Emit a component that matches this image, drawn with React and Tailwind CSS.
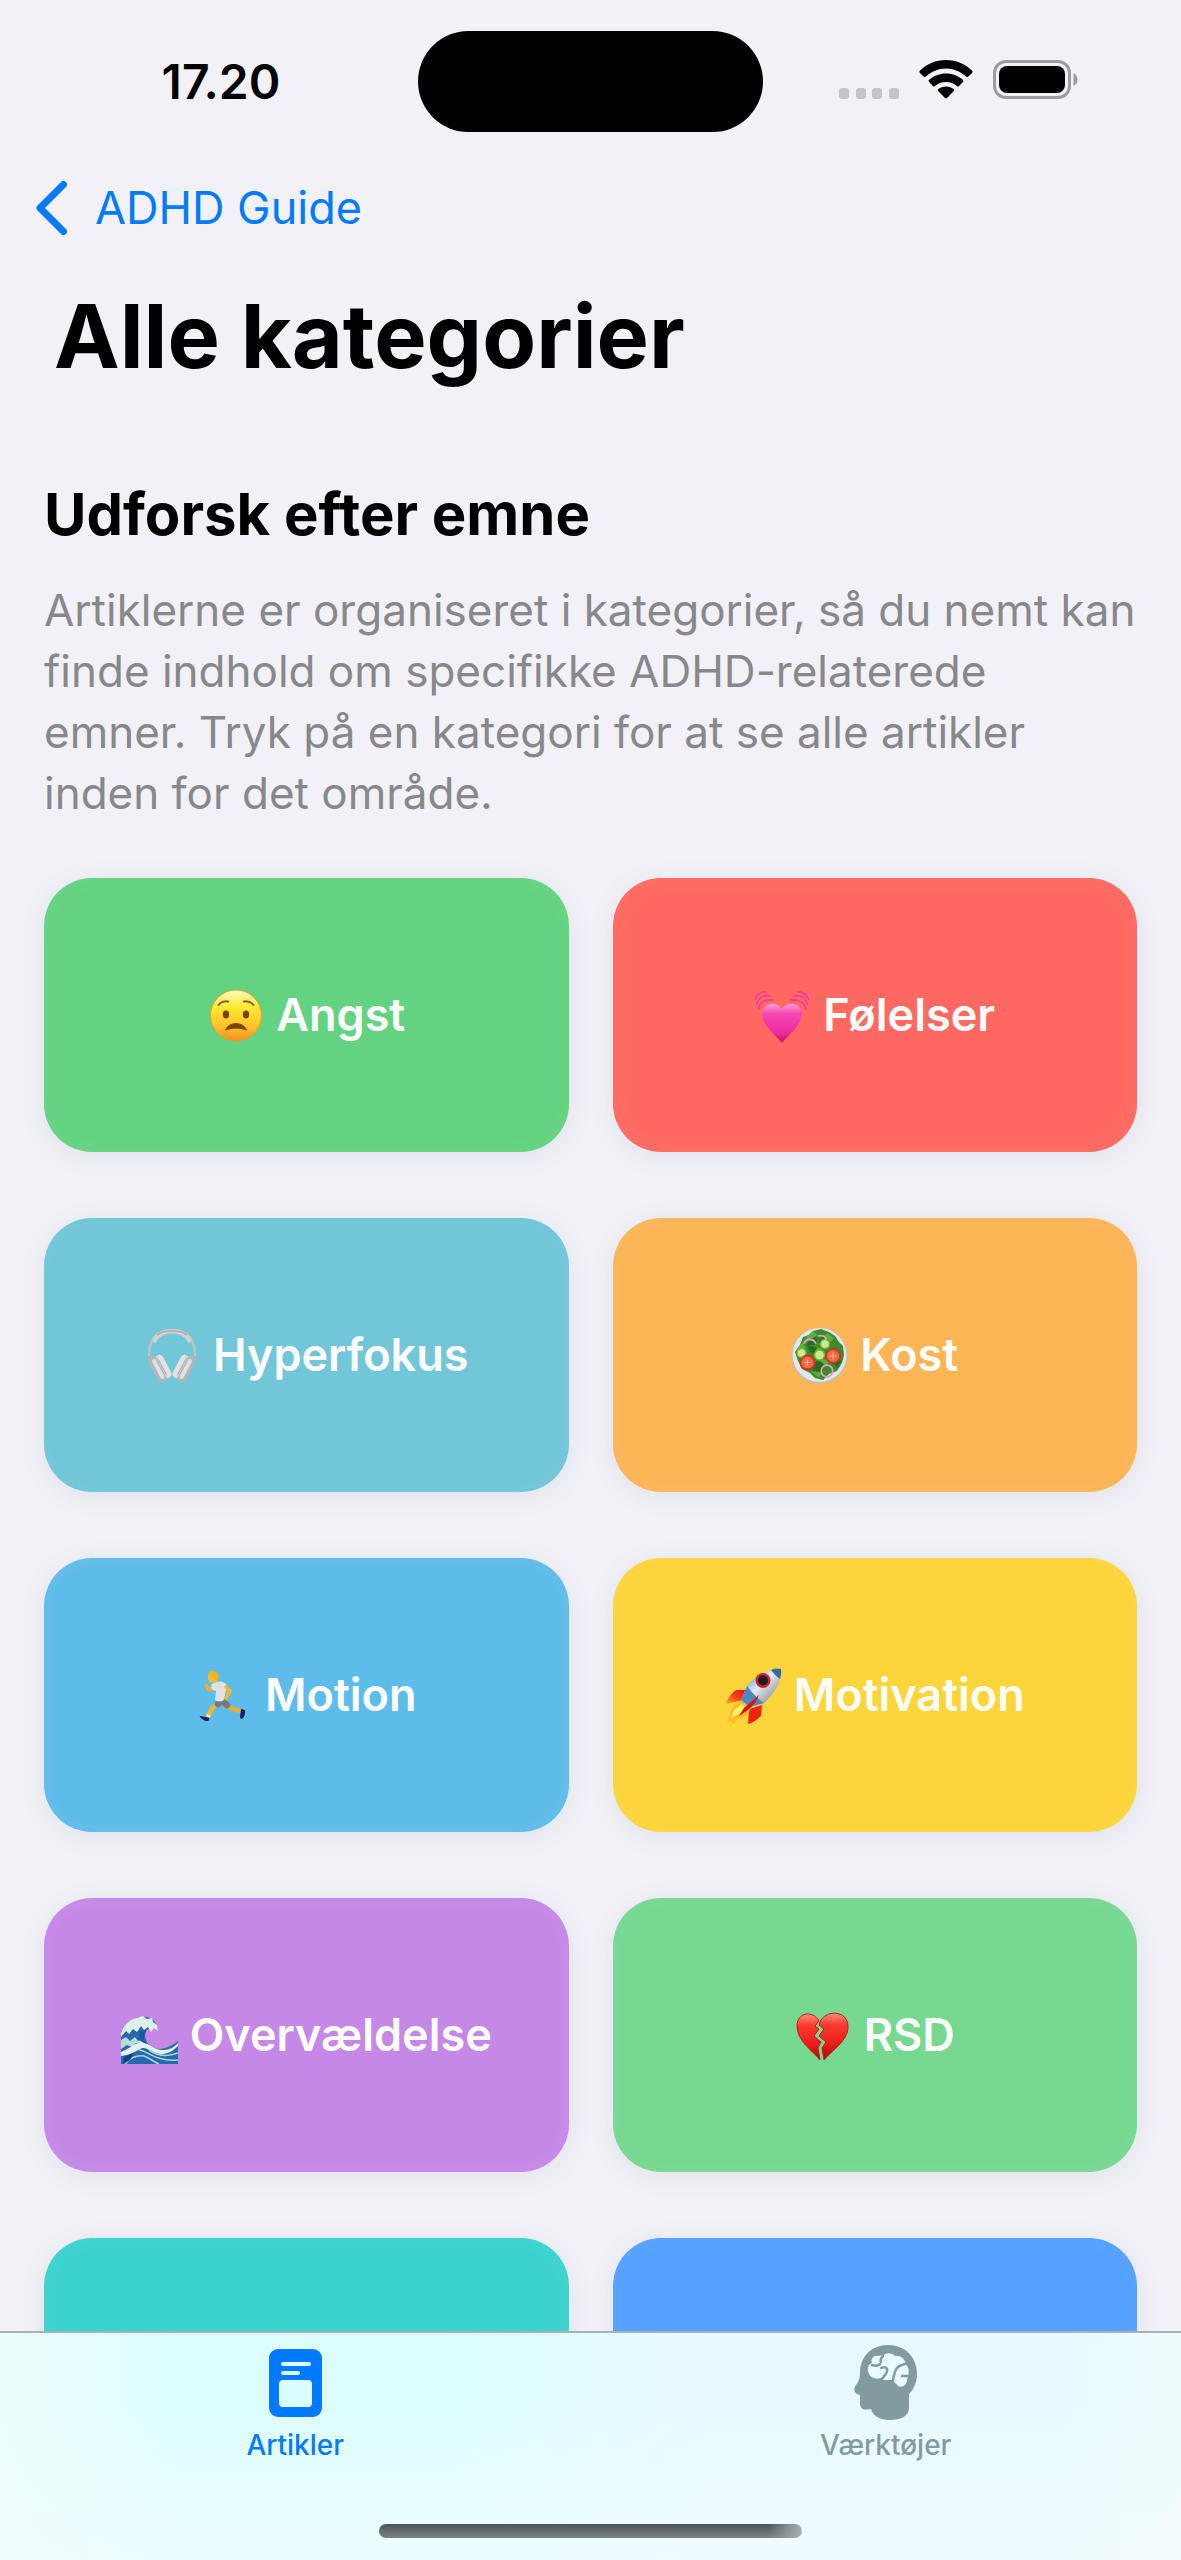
const SignalDots = () => (
  <svg viewBox="0 0 60 44" className="w-[60px] h-11" fill="#c5c5c9" aria-hidden="true">
    <rect x="0" y="28" width="10" height="11" rx="3" />
    <rect x="17" y="28" width="10" height="11" rx="3" />
    <rect x="33" y="28" width="10" height="11" rx="3" />
    <rect x="50" y="28" width="10" height="11" rx="3" />
  </svg>
);

const WifiIcon = () => (
  <svg viewBox="0 0 54 44" className="w-[54px] h-11" aria-hidden="true">
    <path d="M27 0C17 0 8 4 1 10.500C0.200 11.300 0.200 12.200 0.900 12.900L4.600 16.600C5.300 17.300 6.100 17.200 6.900 16.500C12.500 11.500 19.500 8.500 27 8.500S41.500 11.500 47.100 16.500C47.900 17.200 48.700 17.300 49.400 16.600L53.100 12.900C53.800 12.200 53.800 11.300 53 10.500C46 4 37 0 27 0Z" />
    <path d="M27 13.500C20.500 13.500 14.700 15.800 10.200 19.800C9.400 20.500 9.400 21.400 10.100 22.100L13.900 25.900C14.600 26.600 15.400 26.600 16.200 25.900C19.100 23.400 22.800 21.900 27 21.900S34.900 23.400 37.800 25.900C38.600 26.600 39.400 26.600 40.100 25.900L43.900 22.100C44.600 21.400 44.600 20.500 43.800 19.800C39.300 15.800 33.500 13.500 27 13.500Z" />
    <path d="M27 26.500C24 26.500 21.500 27.400 19.500 29C18.600 29.700 18.700 30.600 19.400 31.300L25.700 37.700C26.500 38.500 27.500 38.500 28.300 37.700L34.600 31.300C35.300 30.600 35.400 29.700 34.500 29C32.500 27.400 30 26.500 27 26.500Z" />
  </svg>
);

const BatteryIcon = () => (
  <svg viewBox="0 0 85 44" className="w-[85px] h-11" aria-hidden="true">
    <rect x="1.500" y="1.500" width="75" height="36" rx="11.500" fill="none" stroke="#9c9ca0" strokeWidth="3" />
    <rect x="6" y="6" width="66" height="27" rx="8" />
    <path d="M80.500 13C83.500 14.500 84.500 17 84.500 19.500S83.500 24.500 80.500 26Z" fill="#9c9ca0" />
  </svg>
);

const WorriedFace = () => (
  <svg viewBox="0 0 57 57" className="size-[57px]" aria-hidden="true">
    <defs>
      <linearGradient id="face" x1="0" y1="0" x2="0" y2="1">
        <stop offset="0" stopColor="#fffbc0" />
        <stop offset="0.350" stopColor="#ffe72f" />
        <stop offset="0.700" stopColor="#fec42a" />
        <stop offset="1" stopColor="#f98f1e" />
      </linearGradient>
    </defs>
    <circle cx="29" cy="28.500" r="25.500" fill="url(#face)" stroke="#f0941c" strokeWidth="0.800" />
    <g fill="none" stroke="#8a4a0c" strokeWidth="1.800" strokeLinecap="round">
      <path d="M11.500 18C14 15 17.500 14 21 14.500" />
      <path d="M37 14.500C40.500 14 44 15 46.500 18" />
    </g>
    <ellipse cx="19" cy="27.500" rx="3.200" ry="4" fill="#7a430d" />
    <ellipse cx="39" cy="27.500" rx="3.200" ry="4" fill="#7a430d" />
    <path d="M18.500 43C21.500 34.500 36.500 34.500 39.500 43C34 40.500 24 40.500 18.500 43Z" fill="#7a430d" stroke="#7a430d" strokeLinejoin="round" />
  </svg>
);

const BeatingHeart = () => (
  <svg viewBox="0 0 57 57" className="size-[57px]" aria-hidden="true">
    <defs>
      <linearGradient id="pink" x1="0" y1="0" x2="0" y2="1">
        <stop offset="0" stopColor="#ff9fd8" />
        <stop offset="0.250" stopColor="#f747b0" />
        <stop offset="0.750" stopColor="#ea2b9f" />
        <stop offset="1" stopColor="#c90f60" />
      </linearGradient>
    </defs>
    <path d="M28 56C24 50 8 39 8 27C8 16 22 13 28 22C34 13 48 16 48 27C48 39 32 50 28 56Z" fill="url(#pink)" />
    <g fill="none" stroke="#ee3c9f" strokeWidth="1.700" strokeLinecap="round">
      <path d="M4.500 22C5 16 10 12 19.500 13" />
      <path d="M2.500 17.500C4 11 9 7.500 16.500 9" />
      <path d="M1.500 12C3.500 7 7.500 4.500 12.500 5" />
      <path d="M51.500 22C51 16 46 12 36.500 13" />
      <path d="M53.500 17.500C52 11 47 7.500 39.500 9" />
      <path d="M54.500 12C52.500 7 48.500 4.500 43.500 5" />
    </g>
  </svg>
);

const Headphones = () => (
  <svg viewBox="0 0 57 57" className="size-[57px]" aria-hidden="true">
    <path d="M5 29C5 24 5.500 20 7 16C10 7 18 3 28 3S46 7 49 16C50.500 20 51 24 51 29" fill="none" stroke="#c3c3c6" strokeWidth="2.200" />
    <path d="M8 14C12 5 19 2 28 2S44 5 48 14L44.500 16C41 9 35 6.500 28 6.500S15 9 11.500 16Z" fill="#d0cfd1" />
    <path d="M13 8C20 2.500 36 2.500 43 8" fill="none" stroke="#a8a5a9" strokeWidth="1.200" />
    <g fill="none" strokeLinecap="round">
      <path d="M15.500 32L23.500 47M40.500 32L32.500 47" stroke="#e2e2e4" strokeWidth="8" />
      <path d="M8.500 33L18 51M47.500 33L38 51" stroke="#b4b5b9" strokeWidth="9" />
      <path d="M10 34L18.500 50M46 34L37.500 50" stroke="#dfe0e2" strokeWidth="4" />
      <path d="M13.500 31L22.500 48M42.500 31L33.500 48" stroke="#a9abaf" strokeWidth="1" />
    </g>
  </svg>
);

const SaladBowl = () => (
  <svg viewBox="0 0 57 57" className="size-[57px]" aria-hidden="true">
    <circle cx="28.500" cy="28.500" r="28" fill="#b9bfc4" />
    <circle cx="28.500" cy="28" r="27" fill="#e3e6e8" />
    <path d="M22 4L30 2L38 5L44 9L48 15L52 19L53 28L51 36L46 44L38 47L32 53L24 51L19 46L11 42L7 34L4 25L9 18L12 10L18 8Z" fill="#3d8a2c" />
    <g fill="#2a6b20">
      <path d="M20 8L27 12L24 18L16 18Z" />
      <path d="M31 9L39 13L34 19L28 15Z" />
      <path d="M8 31L18 28L15 35Z" />
      <path d="M25 34L35 36L30 45L21 44Z" />
      <path d="M16 18L27 21L25 27L19 25Z" />
      <path d="M42 35L51 33L46 41Z" />
    </g>
    <g fill="#5fae3c">
      <path d="M22 4L27 8L18 13L15 10Z" />
      <path d="M36 6L43 11L40 15L33 10Z" />
      <path d="M27 20L34 25L24 24Z" />
      <path d="M20 44L31 46L28 51Z" />
      <path d="M6 22L11 16L15 21L10 23Z" />
      <path d="M29 33L40 32L35 40Z" />
    </g>
    <g fill="#cdeb8c" stroke="#78b53a" strokeWidth="1.500">
      <circle cx="34" cy="17" r="4.500" />
      <circle cx="10.500" cy="26" r="4.500" />
      <circle cx="28.500" cy="28" r="5" />
    </g>
    <g fill="#ef6848" stroke="#c83524" strokeWidth="1.800">
      <circle cx="16.500" cy="35.500" r="7" />
      <circle cx="42" cy="29" r="7" />
    </g>
    <g stroke="#ffab88" strokeWidth="1.200">
      <path d="M13 35.500H20M16.500 32V39M38.500 29H45.500M42 25.500V32.500" />
    </g>
    <g fill="none" stroke="#d9a3ba" strokeWidth="1.800">
      <circle cx="36" cy="44" r="5.800" />
      <path d="M13 17C14 11 23 11 25 17M27 9C31 8 35 9 35 13" />
    </g>
  </svg>
);

const Runner = () => (
  <svg viewBox="0 0 57 57" className="size-[57px]" aria-hidden="true">
    <g fill="none" strokeLinecap="round" strokeLinejoin="round">
      <path d="M17 20L13 23L10 18.500" stroke="#f6ad21" strokeWidth="3.400" />
      <path d="M22 37L16 41L12 49" stroke="#fbb626" strokeWidth="4.500" />
      <path d="M28 38L35 41L44 44" stroke="#f6ad21" strokeWidth="4" />
      <path d="M24 34L22 37M26 34L31 38" stroke="#77787d" strokeWidth="6.500" />
    </g>
    <path d="M15 18C19 14 27 13 31 18L28 33C25 35 22 35 19 33L20 24L16 23Z" fill="#dfe1e5" />
    <path d="M30 20L34 24L30 31" fill="none" stroke="#fbb626" strokeWidth="3.600" strokeLinecap="round" strokeLinejoin="round" />
    <circle cx="17" cy="10.500" r="5.200" fill="#fbb92a" />
    <path d="M12 7C12 3 21 2.500 22.500 7.500C23.500 12 21 14.500 18.500 12C18 9 15 9 12 7Z" fill="#f0b41e" />
    <path d="M3.500 49C7 49 10 50 13.500 51L12.500 54C9 54.500 5 52 3.500 49Z" fill="#15206a" />
    <path d="M45 42L49 43C49.500 48 47.500 52 45 52L44 50Z" fill="#15206a" />
    <path d="M11 48L14 50" stroke="#fff" strokeWidth="2" />
  </svg>
);

const Rocket = () => (
  <svg viewBox="0 0 57 57" className="size-[57px]" aria-hidden="true">
    <defs>
      <linearGradient id="hull" x1="0" y1="0" x2="1" y2="1">
        <stop offset="0.150" stopColor="#4f93cf" />
        <stop offset="0.450" stopColor="#e6ebee" />
        <stop offset="0.700" stopColor="#aab0b7" />
        <stop offset="1" stopColor="#356fae" />
      </linearGradient>
      <linearGradient id="fin" x1="1" y1="0" x2="0" y2="1">
        <stop offset="0" stopColor="#dc1010" />
        <stop offset="0.500" stopColor="#ff3b12" />
        <stop offset="1" stopColor="#ffb21a" />
      </linearGradient>
    </defs>
    <path d="M23 23L11 23C6 27 2 32 1 37L18 33Z" fill="url(#fin)" />
    <path d="M37 38L36 49C32 53 27 56 23 57L24 42Z" fill="#ef2412" />
    <path d="M18 33L8 39L2 56L6 54L8 57L14 51L21 49L27 40Z" fill="#ffbd24" />
    <path d="M17 37L9 43L6 51L14 47L22 42Z" fill="#fff16a" />
    <path d="M56 2C43 1 31 8 22 19L16 33L25 40L39 36C50 26 57 14 56 2Z" fill="url(#hull)" />
    <path d="M56 2C51 1.500 48 2 46 3C49 7 52 10 55 12C56 8 56.500 5 56 2Z" fill="#2c6aa8" />
    <path d="M22 19L16 33L25 40L39 36C33 32 27 26 22 19Z" fill="#4f87bd" />
    <path d="M34 28L19 41L14 49C24 43 30 38 34 28Z" fill="#d61515" />
    <circle cx="38" cy="13.500" r="7.500" fill="#d51d2b" />
    <circle cx="38" cy="13.500" r="5" fill="#1d1b22" />
  </svg>
);

const Wave = () => (
  <svg viewBox="0 0 57 57" className="size-[57px]" aria-hidden="true">
    <path d="M0 57V25C4 16 12 11 21 10C29 9 35 14 37 22L30 20L25 24C22 32 27 40 37 42C46 42 52 38 57 34V57Z" fill="#2869a9" />
    <path d="M0 26C3 17 10 12 16 11L22 9L26 12L31 11L32 15L36 18L37 24L33 21L30 25L27 20L23 23L20 19L16 25L12 22L8 27L5 24L0 30Z" fill="#dcefe8" />
    <path d="M0 33L5 30L9 34L14 30L17 34L22 31L20 37L15 36L11 40L6 38L0 42Z" fill="#b7dcdc" />
    <path d="M0 45C8 42 15 35 22 35C30 38 35 44 43 43C49 43 53 40 57 36V39C51 45 46 47 40 47C32 47 27 40 21 41C14 45 8 48 0 49Z" fill="#e4f2ec" />
    <g fill="none" stroke="#a7d3dc" strokeWidth="1.600">
      <path d="M18 43C27 44 35 55 57 53" />
      <path d="M28 43C38 50 47 50 57 46" />
      <path d="M4 57C10 50 16 48 23 49C29 51 33 55 38 57" />
    </g>
    <path d="M3 50L13 46L9 53L2 57Z" fill="#123f83" />
    <path d="M19 24L25 24C22 29 23 34 25 37L18 33Z" fill="#1f55a5" />
  </svg>
);

const BrokenHeart = () => (
  <svg viewBox="0 0 57 57" className="size-[57px]" aria-hidden="true">
    <defs>
      <linearGradient id="red" x1="0" y1="0" x2="0" y2="1">
        <stop offset="0" stopColor="#ff8f7c" />
        <stop offset="0.250" stopColor="#fa3a2f" />
        <stop offset="0.650" stopColor="#ec1f1a" />
        <stop offset="1" stopColor="#a80808" />
      </linearGradient>
    </defs>
    <g fill="url(#red)" stroke="#c81512" strokeWidth="1">
      <path d="M24 14C18 3 2 5 2 19C2 34 17 43 25 53L23 41L26 35L19 29L24 22L20 19Z" />
      <path d="M25 15C30 3 53 2 53 20C53 34 37 43 29 53L27 41L31 35L24 29L29 22L24 18Z" />
    </g>
  </svg>
);

const ArticleIcon = () => (
  <svg viewBox="0 0 53 68" className="w-[53px] h-[68px]" aria-hidden="true">
    <rect width="53" height="68" rx="9" fill="#007aff" />
    <g fill="#dcfdff">
      <rect x="12" y="13" width="30" height="4" rx="2" />
      <rect x="12" y="22" width="19" height="4" rx="2" />
      <rect x="10" y="31" width="33" height="27" rx="4" />
    </g>
  </svg>
);

const BrainHeadIcon = () => (
  <svg viewBox="0 0 64 76" className="w-16 h-[76px]" aria-hidden="true">
    <path
      d="M34 0C17 0 6 12 6 28C6 33 5 36 2 40C-1 44 0 49 6 50V58C6 63 9 65 13 64.500L17 64C19 71 26 75 36 75C47 75 55 71 55 63V49C60 44 63 37 63 29C63 12 51 0 34 0Z"
      fill="#819ba1"
    />
    <path
      d="M25 11C20 10 16 14 18 18C14 19 13 24 14.500 28C17 34 25 35 28 32L29 35H38C40 37 42 38 44 41C48 43 53 40 53 35C55 30 56 23 52 20C51 14 47 10 41 11C37 7 31 8 29 11C28 10 26 10 25 11Z"
      fill="#e9fbff"
    />
    <g fill="none" stroke="#819ba1" strokeWidth="2.500" strokeLinecap="round">
      <path d="M29 11C27 13 26 15 27 17M18 20C21 21 24 21 26 19" />
      <path d="M27 23C31 21 34 23 33 26C33 29 30 30 29 33" />
      <path d="M51 19C45 20 42 23 41 27C40 30 39 32 39 37M48 31H54" />
    </g>
  </svg>
);

const categories = [
  { name: "Angst", icon: WorriedFace, color: "bg-[#63d381]" },
  { name: "Følelser", icon: BeatingHeart, color: "bg-[#ff6961]" },
  { name: "Hyperfokus", icon: Headphones, color: "bg-[#71c6d8]" },
  { name: "Kost", icon: SaladBowl, color: "bg-[#fbb555]" },
  { name: "Motion", icon: Runner, color: "bg-[#5ebcea]" },
  { name: "Motivation", icon: Rocket, color: "bg-[#fcd53b]" },
  { name: "Overvældelse", icon: Wave, color: "bg-[#c588e7]" },
  { name: "RSD", icon: BrokenHeart, color: "bg-[#77d890]" },
  { color: "bg-[#3bd3ce]" },
  { color: "bg-[#54a1ff]" },
];

const CategoryCard = ({ category }) => {
  const Icon = category.icon;

  return (
    <button
      type="button"
      aria-label={category.name || "Kategori"}
      className={`${category.color} h-[274px] rounded-[48px] flex items-center justify-center gap-3 text-white text-[45px] leading-[60px] font-semibold shadow-[0_4px_24px_rgba(60,110,140,0.1),inset_0_0_24px_rgba(255,255,255,0.06)]`}
    >
      {Icon && <Icon />}
      {category.name && <span>{category.name}</span>}
    </button>
  );
};

const StatusBar = () => (
  <div className="grid grid-cols-[1fr_345px_1fr] items-center pt-[31px]">
    <div className="pl-6 text-center text-[48px] leading-[60px] font-semibold">17.20</div>
    <div className="h-[101px] rounded-full bg-black" />
    <div className="flex items-center justify-end gap-5 pr-[103px]">
      <SignalDots />
      <WifiIcon />
      <BatteryIcon />
    </div>
  </div>
);

const TabBar = () => (
  <nav className="h-[229px] shrink-0 flex flex-col border-t-2 border-[#a5b3b8] bg-[linear-gradient(180deg,transparent_30%,rgba(244,252,255,0.7)),linear-gradient(90deg,#edfdfd_0%,#dcfeff_15%,#dcfeff_38%,#e8faff_60%,#e8faff_90%,#f0fbfd_100%)]">
    <div className="flex-1 grid grid-cols-2 text-[28px] leading-8 font-medium">
      <a href="#artikler" className="flex flex-col items-center pt-2 text-[#007aff]">
        <span className="h-[84px] flex items-center">
          <ArticleIcon />
        </span>
        <span className="pt-1">Artikler</span>
      </a>
      <a href="#vaerktoejer" className="flex flex-col items-center pt-2 text-[#819ba1]">
        <span className="h-[84px] flex items-center">
          <BrainHeadIcon />
        </span>
        <span className="pt-1">Værktøjer</span>
      </a>
    </div>
    <div className="w-[423px] h-[14px] mb-[22px] mx-auto rounded-full bg-[linear-gradient(90deg,transparent_92%,#a9b0b2_100%),linear-gradient(#4c5556,#7a8283)]" />
  </nav>
);

const App = () => {
  return (
    <div className="h-screen flex flex-col overflow-hidden bg-[#f2f1f7] text-black font-['Inter','Liberation_Sans',sans-serif]">
      <header>
        <StatusBar />
        <a href="#guide" className="flex items-center gap-7 mt-[46px] pl-9 text-[45px] leading-[60px] text-[#007aff]">
          <svg viewBox="0 0 31 54" className="w-[31px] h-[54px]" aria-hidden="true">
            <path d="M27.500 3.500L4 27L27.500 50.500" fill="none" stroke="#007aff" strokeWidth="7" strokeLinecap="round" strokeLinejoin="round" />
          </svg>
          ADHD Guide
        </a>
        <h1 className="mt-10 px-[54px] text-[88px] leading-[116px] font-bold">Alle kategorier</h1>
      </header>
      <main className="flex-1 min-h-0 overflow-hidden px-11 pt-[82px]">
        <h2 className="text-[58px] leading-[76px] font-bold">Udforsk efter emne</h2>
        <p className="mt-7 text-[44px] leading-[61px] text-[#88888c]">
          Artiklerne er organiseret i kategorier, så du nemt kan finde indhold om specifikke ADHD-relaterede emner. Tryk på en
          kategori for at se alle artikler inden for det område.
        </p>
        <div className="grid grid-cols-2 gap-x-11 gap-y-[66px] mt-[54px]">
          {categories.map((category, i) => (
            <CategoryCard key={i} category={category} />
          ))}
        </div>
      </main>
      <TabBar />
    </div>
  );
};

export default App;
